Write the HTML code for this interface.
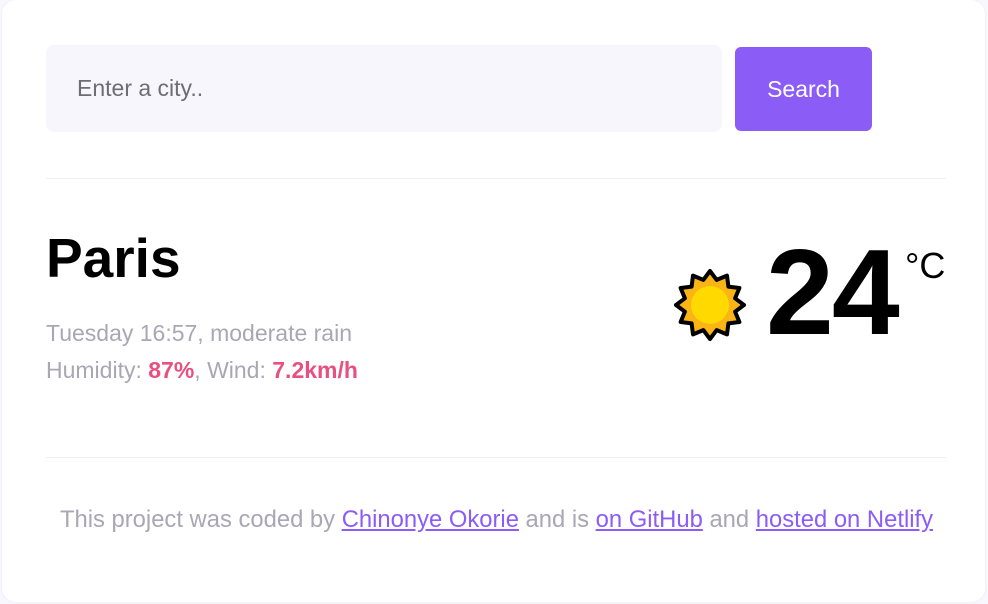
<!DOCTYPE html>
<html><head><meta charset="utf-8"><style>
html,body{margin:0;padding:0;width:988px;height:604px;background:#f8f7fd;overflow:hidden;font-family:"Liberation Sans",Roboto,sans-serif}
.card{position:absolute;left:2px;top:0px;width:983px;height:602px;background:#fff;border-radius:14px;box-shadow:0 0 2px rgba(120,100,180,.12)}
.input{position:absolute;left:46px;top:45px;width:676px;height:87px;background:#f7f6fc;border-radius:8px;box-sizing:border-box;padding-left:31px;line-height:87px;font-size:23px;color:#6d6d72}
.btn{position:absolute;left:735px;top:47px;width:137px;height:84px;background:#8b5cf6;border-radius:6px;color:#fff;font-size:23px;text-align:center;line-height:84px}
.hr{position:absolute;left:46px;width:900px;height:1px;background:#f1f0f5}
h1{position:absolute;left:46px;top:226px;margin:0;font-size:55px;font-weight:bold;color:#000}
.info{position:absolute;left:46px;top:315px;font-size:23px;color:#a9a7b4;line-height:37px}
.info b{color:#e8507f}
.temp{position:absolute;left:766px;top:222px;font-size:122px;font-weight:bold;color:#000;letter-spacing:-2px}
.unit{position:absolute;left:905px;top:245px;font-size:36px;color:#000}
.foot{position:absolute;left:0;width:993px;top:506px;text-align:center;font-size:23.8px;color:#a9a7b4}
.foot a{color:#8b5cf6;text-decoration:underline}
</style></head><body>
<div class="card"></div>
<div class="input">Enter a city..</div>
<div class="btn">Search</div>
<div class="hr" style="top:178px"></div>
<h1>Paris</h1>
<div class="info">Tuesday 16:57, moderate rain<br>Humidity: <b>87%</b>, Wind: <b>7.2km/h</b></div>
<svg style="position:absolute;left:672px;top:267px" width="76" height="76" viewBox="-38 -38 76 76">
<polygon points="34,0 25.1,6.7 29.4,17 18.4,18.4 17,29.4 6.7,25.1 0,34 -6.7,25.1 -17,29.4 -18.4,18.4 -29.4,17 -25.1,6.7 -34,0 -25.1,-6.7 -29.4,-17 -18.4,-18.4 -17,-29.4 -6.7,-25.1 0,-34 6.7,-25.1 17,-29.4 18.4,-18.4 29.4,-17 25.1,-6.7" fill="#fbb416" stroke="#000" stroke-width="4" stroke-linejoin="round"/>
<circle r="19" fill="#ffd900"/>
</svg>
<div class="temp">24</div>
<div class="unit">°C</div>
<div class="hr" style="top:457px"></div>
<div class="foot">This project was coded by <a>Chinonye Okorie</a> and is <a>on GitHub</a> and <a>hosted on Netlify</a></div>
</body></html>
